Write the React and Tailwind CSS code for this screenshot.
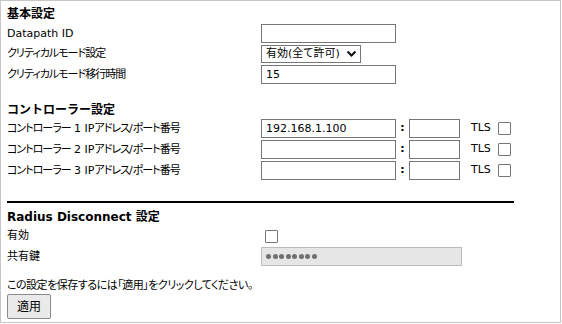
import React from 'react';

const font = 'font-["DejaVu_Sans","Noto_Sans_CJK_JP",sans-serif] [font-feature-settings:"palt"]';
const box = 'h-[19px] border border-[#767676] bg-white px-[4px] text-[11px] leading-[17px] text-black';
const heading = 'text-[12px] font-bold leading-[16px] [font-feature-settings:normal]';

// Japanese runs are set a little tighter, like the bitmap UI font of the original
const J = ({ children }) => <span className="tracking-[-1px]">{children}</span>;

function Row({ label, children, className = '' }) {
  return (
    <div className={`flex items-center ${className}`}>
      <div className="w-[254px] text-[11px] leading-[14px]">{label}</div>
      {children}
    </div>
  );
}

function Check({ className = '' }) {
  return <span className={`block w-[13px] h-[13px] border border-[#767676] bg-white rounded-[1px] ${className}`} />;
}

function ControllerRow({ n, ip }) {
  return (
    <Row label={<><J>コントローラー</J> {n} IP<J>アドレス</J>/<J>ポート番号</J></>}>
      <div className={`${box} w-[135px]`}>{ip}</div>
      <span className="w-[13px] text-center text-[11px] font-bold">:</span>
      <div className={`${box} w-[51px]`} />
      <span className="ml-[11px] text-[11px]">TLS</span>
      <Check className="ml-[7px]" />
    </Row>
  );
}

export default function App() {
  return (
    <div className={`w-[561px] h-[323px] border border-[#c6c6c6] bg-white text-black pl-[6px] ${font}`}>
      <h2 className={`mt-[5px] ${heading}`}>基本設定</h2>
      <Row label="Datapath ID" className="mt-[2px]">
        <div className={`${box} w-[135px]`} />
      </Row>
      <Row label={<J>クリティカルモード設定</J>} className="mt-[2px]">
        <div className="flex items-center h-[18px] w-[100px] border border-[#767676] pl-[4px] text-[11px]">
          <span>有効(全て許可)</span>
          <svg className="ml-[6px]" width="11" height="8" viewBox="0 0 11 8">
            <path d="M1.5 1.5 L5.5 5.5 L9.5 1.5" fill="none" stroke="#111" strokeWidth="2" />
          </svg>
        </div>
      </Row>
      <Row label={<J>クリティカルモード移行時間</J>} className="mt-[2px]">
        <div className={`${box} w-[135px]`}>15</div>
      </Row>

      <h2 className={`mt-[18px] ${heading}`}>コントローラー設定</h2>
      <div className="mt-[1px] flex flex-col gap-[2px]">
        <ControllerRow n={1} ip="192.168.1.100" />
        <ControllerRow n={2} ip="" />
        <ControllerRow n={3} ip="" />
      </div>

      <div className="mt-[21px] w-[507px] h-[2px] bg-black" />

      <h2 className={`mt-[6px] ${heading}`}>Radius Disconnect 設定</h2>
      <Row label="有効" className="mt-[4px]">
        <Check className="ml-[4px]" />
      </Row>
      <Row label="共有鍵" className="mt-[4px]">
        <div className="flex items-center gap-[1.5px] h-[19px] w-[201px] border border-[#bcbcbc] bg-[#e6e6e6] px-[4px]">
          {Array.from({ length: 8 }).map((_, i) => (
            <span key={i} className="w-[5px] h-[5px] rounded-full bg-[#6f6f6f]" />
          ))}
        </div>
      </Row>

      <p className="mt-[13px] text-[11px] leading-[14px] tracking-[-0.5px]">この設定を保存するには「適用」をクリックしてください。</p>
      <button className="mt-[1px] w-[44px] h-[25px] border border-[#8a8a8a] rounded-[2px] bg-[#eaeaea] text-[12px]">適用</button>
    </div>
  );
}
